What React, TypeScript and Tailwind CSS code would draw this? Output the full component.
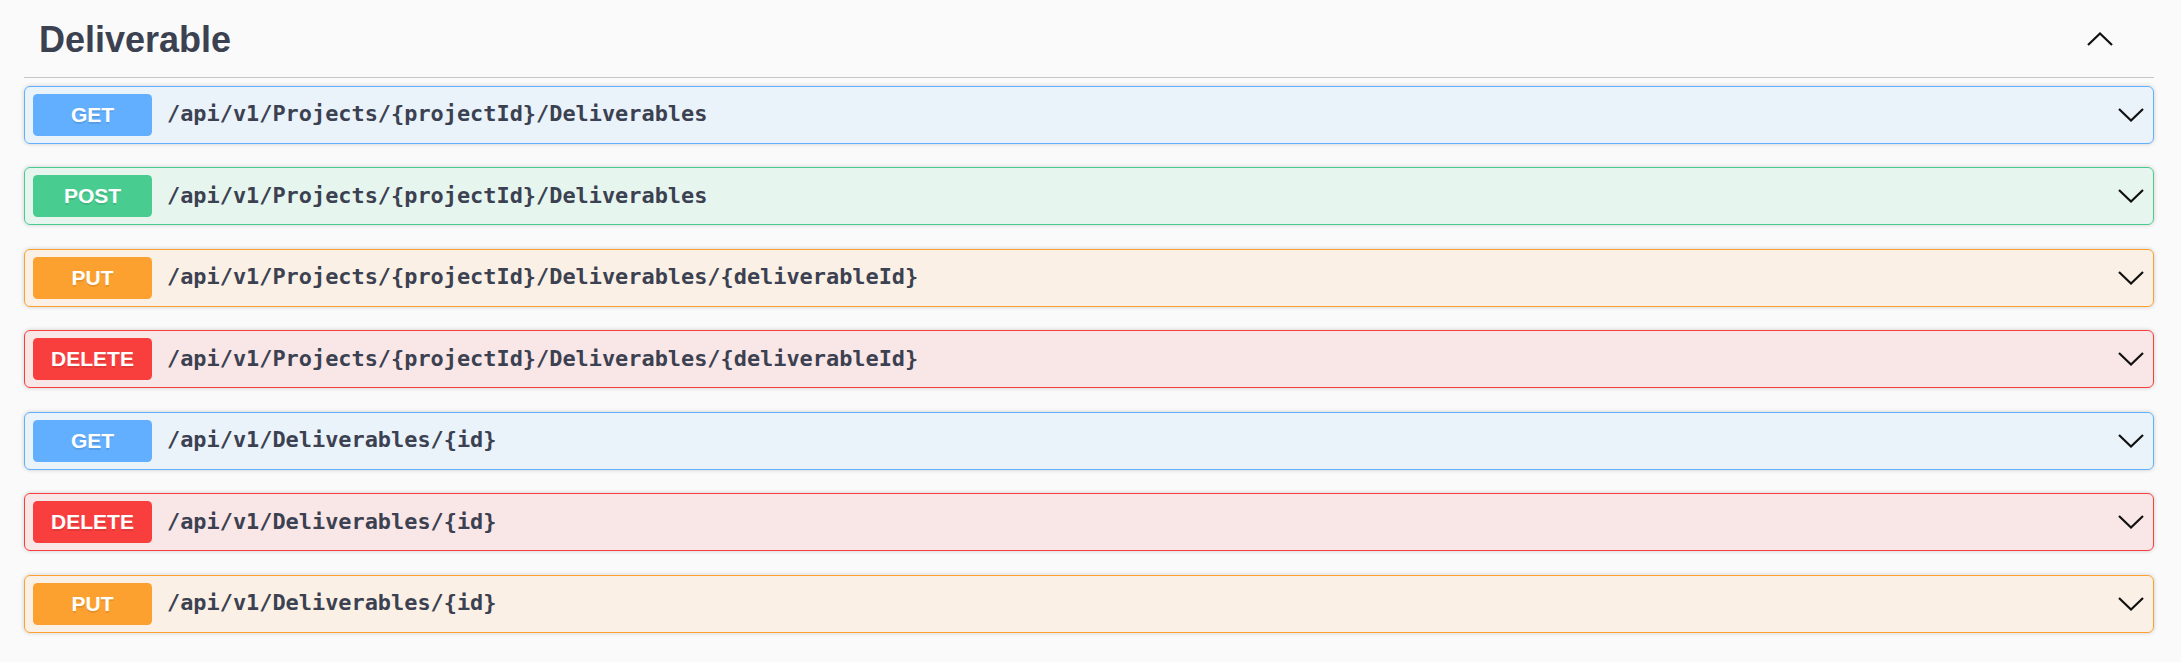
import React from 'react';

type Method = 'GET' | 'POST' | 'PUT' | 'DELETE';

interface Operation {
  method: Method;
  path: string;
}

const operations: Operation[] = [
  { method: 'GET', path: '/api/v1/Projects/{projectId}/Deliverables' },
  { method: 'POST', path: '/api/v1/Projects/{projectId}/Deliverables' },
  { method: 'PUT', path: '/api/v1/Projects/{projectId}/Deliverables/{deliverableId}' },
  { method: 'DELETE', path: '/api/v1/Projects/{projectId}/Deliverables/{deliverableId}' },
  { method: 'GET', path: '/api/v1/Deliverables/{id}' },
  { method: 'DELETE', path: '/api/v1/Deliverables/{id}' },
  { method: 'PUT', path: '/api/v1/Deliverables/{id}' },
];

const methodStyles: Record<Method, { row: string; badge: string }> = {
  GET: { row: 'border-[#61affe] bg-[#61affe]/10', badge: 'bg-[#61affe]' },
  POST: { row: 'border-[#49cc90] bg-[#49cc90]/10', badge: 'bg-[#49cc90]' },
  PUT: { row: 'border-[#fca130] bg-[#fca130]/10', badge: 'bg-[#fca130]' },
  DELETE: { row: 'border-[#f93e3e] bg-[#f93e3e]/10', badge: 'bg-[#f93e3e]' },
};

function Chevron({ up = false }: { up?: boolean }) {
  return (
    <svg width="26" height="14" viewBox="0 0 26 14" fill="none" className="shrink-0">
      <polyline
        points={up ? '1,13 13,1.5 25,13' : '1,1 13,12.5 25,1'}
        stroke="#111"
        strokeWidth="2.2"
        strokeLinejoin="miter"
      />
    </svg>
  );
}

function OperationRow({ op }: { op: Operation }) {
  const s = methodStyles[op.method];
  return (
    <div
      className={`flex items-center h-[58px] border rounded-[6px] pl-[8px] pr-[9px] shadow-[0_0_4px_rgba(0,0,0,0.19)] ${s.row}`}
    >
      <span
        className={`flex items-center justify-center w-[119px] h-[42px] rounded-[4.5px] text-white text-[21px] font-bold font-['Liberation_Sans',Arial,sans-serif] [text-shadow:0_1.5px_0_rgba(0,0,0,0.1)] ${s.badge}`}
      >
        {op.method}
      </span>
      <span className="ml-[15px] text-[21.9px] font-bold text-[#3b4151] font-['DejaVu_Sans_Mono',monospace]">
        {op.path}
      </span>
      <span className="ml-auto">
        <Chevron />
      </span>
    </div>
  );
}

export default function App() {
  return (
    <div className="min-h-screen bg-[#fafafa] pl-[24px] pr-[27px] font-['Liberation_Sans',Arial,sans-serif]">
      <div className="flex items-center h-[78px] border-b border-[#c6c6c6] pl-[15px] pr-[41px]">
        <h3 className="mt-[3px] text-[36px] leading-[40px] font-bold text-[#3b4151]">Deliverable</h3>
        <span className="ml-auto">
          <Chevron up />
        </span>
      </div>
      <div className="flex flex-col gap-[23.5px] mt-[7.7px]">
        {operations.map((op, i) => (
          <OperationRow key={i} op={op} />
        ))}
      </div>
    </div>
  );
}
